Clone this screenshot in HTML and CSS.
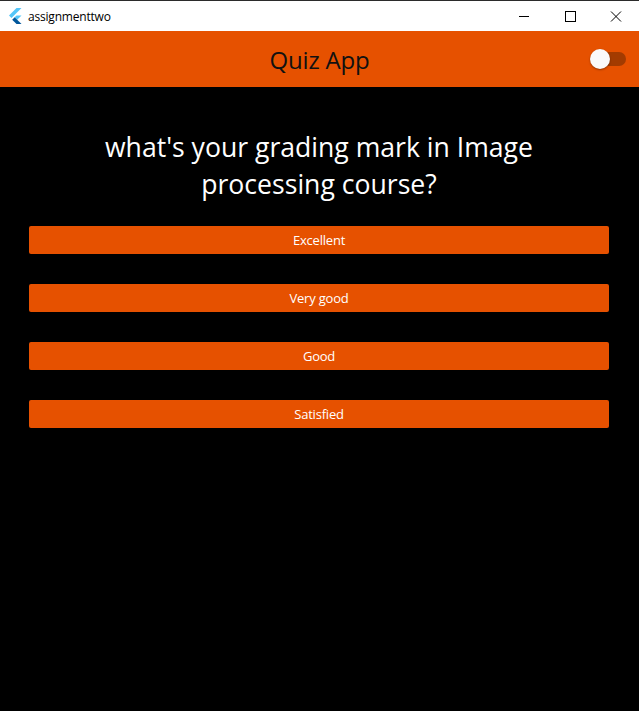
FILE: index.html
```html
<!DOCTYPE html>
<html>
<head>
<meta charset="utf-8">
<link rel="stylesheet" href="styles.css">
</head>
<body>
<div class="window">
  <div class="titlebar">
    <svg class="logo" width="14" height="16" viewBox="0 0 14 16">
      <polygon points="8.5,0 13.5,0 3.5,10 1,7.5" fill="#54C5F8"/>
      <polygon points="8.5,7.4 13.5,7.4 9.2,11.7 6.7,9.2" fill="#54C5F8"/>
      <polygon points="6.7,9.2 9.2,11.7 13.5,16 8.5,16 4.2,11.7" fill="#01579B"/>
    </svg>
    <span class="wtitle">assignmenttwo</span>
    <div class="wbtns">
      <svg width="46" height="30" viewBox="0 0 46 30"><line x1="18" y1="15.5" x2="28" y2="15.5" stroke="#000" stroke-width="1"/></svg>
      <svg width="46" height="30" viewBox="0 0 46 30"><rect x="18.5" y="10.5" width="10" height="10" fill="none" stroke="#000" stroke-width="1"/></svg>
      <svg width="46" height="30" viewBox="0 0 46 30"><path d="M18 10.5 L28 20.5 M28 10.5 L18 20.5" stroke="#000" stroke-width="1"/></svg>
    </div>
  </div>
  <header class="appbar">
    <h1 class="apptitle">Quiz App</h1>
    <div class="toggle"><div class="track"></div><div class="thumb"></div></div>
  </header>
  <main class="content">
    <p class="question">what's your grading mark in Image processing course?</p>
    <div class="answers">
      <button class="answer">Excellent</button>
      <button class="answer">Very good</button>
      <button class="answer">Good</button>
      <button class="answer">Satisfied</button>
    </div>
  </main>
</div>
</body>
</html>
```
FILE: styles.css
```css
html, body {
  margin: 0;
  padding: 0;
  background: #000;
}
.window {
  width: 639px;
  height: 711px;
  display: flex;
  flex-direction: column;
  font-family: "Open Sans", "Noto Sans", sans-serif;
  overflow: hidden;
}
.titlebar {
  height: 30px;
  background: #fff;
  border-top: 1px solid #2b2b2b;
  display: flex;
  align-items: center;
  flex-shrink: 0;
}
.logo {
  margin-left: 8px;
  margin-right: 6px;
}
.wtitle {
  font-size: 12px;
  color: #000;
  letter-spacing: -0.2px;
}
.wbtns {
  margin-left: auto;
  display: flex;
}
.wbtns svg {
  display: block;
}
.appbar {
  height: 56px;
  background: #E65100;
  display: flex;
  align-items: center;
  justify-content: center;
  position: relative;
  flex-shrink: 0;
}
.apptitle {
  margin: 0;
  font-weight: 400;
  font-size: 24px;
  color: #111;
  letter-spacing: -0.2px;
}
.toggle {
  position: absolute;
  right: 13px;
  top: 18px;
  width: 36px;
  height: 20px;
}
.track {
  position: absolute;
  left: 10px;
  top: 3px;
  width: 26px;
  height: 14px;
  border-radius: 7px;
  background: #A33B00;
}
.thumb {
  position: absolute;
  left: 0;
  top: 0;
  width: 20px;
  height: 20px;
  border-radius: 50%;
  background: #fafafa;
  box-shadow: 0 1px 2px rgba(0,0,0,0.35);
}
.content {
  flex: 1;
  background: #000;
  padding: 0 30px 0 29px;
}
.question {
  margin: 42px 40px 23px;
  text-align: center;
  color: #fff;
  font-size: 26.6px;
  line-height: 37px;
  letter-spacing: 0;
}
.answers {
  display: flex;
  flex-direction: column;
  gap: 30px;
}
.answer {
  height: 28px;
  border: none;
  border-radius: 2px;
  background: #E65100;
  color: #fff;
  font-family: "Open Sans", "Noto Sans", sans-serif;
  font-size: 13px;
  letter-spacing: -0.2px;
  padding: 0;
}
```
